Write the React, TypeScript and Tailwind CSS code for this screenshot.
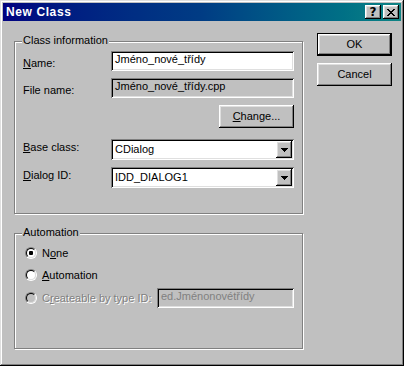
import React from 'react';

// Win98 bevels
const raised = 'shadow-[inset_-1px_-1px_#000,inset_1px_1px_#fff,inset_-2px_-2px_#808080,inset_2px_2px_#dfdfdf]';
const sunken = 'shadow-[inset_1px_1px_#808080,inset_-1px_-1px_#fff,inset_2px_2px_#000,inset_-2px_-2px_#dfdfdf]';

const U: React.FC<{ children: React.ReactNode }> = ({ children }) => (
  <span className="underline underline-offset-[1px]">{children}</span>
);

const GroupBox: React.FC<{ title: string; className: string; children: React.ReactNode }> = ({ title, className, children }) => (
  <div className={`relative border border-[#808080] shadow-[inset_1px_1px_#fff,1px_1px_#fff] ${className}`}>
    <span className="absolute -top-[8px] left-[7px] px-[1px] bg-[#c0c0c0]">{title}</span>
    {children}
  </div>
);

const Combo: React.FC<{ value: string }> = ({ value }) => (
  <div className={`flex items-center h-[21px] w-[183px] bg-white pl-[4px] pr-[2px] ${sunken}`}>
    <span className="flex-1">{value}</span>
    <div className={`flex items-center justify-center w-[16px] h-[17px] bg-[#c0c0c0] ${raised}`}>
      <svg width="7" height="4" viewBox="0 0 7 4" className="mt-[1px]">
        <path d="M0 0h7v1H0zM1 1h5v1H1zM2 2h3v1H2zM3 3h1v1H3z" fill="#000" />
      </svg>
    </div>
  </div>
);

const Radio: React.FC<{ checked?: boolean; disabled?: boolean }> = ({ checked, disabled }) => (
  <span className="w-[12px] h-[12px] shrink-0 rounded-full border border-t-[#808080] border-l-[#808080] border-r-white border-b-white">
    <span
      className={`flex items-center justify-center w-full h-full rounded-full border border-t-black border-l-black border-r-[#dfdfdf] border-b-[#dfdfdf] ${disabled ? 'bg-[#c0c0c0]' : 'bg-white'}`}
    >
      {checked && <span className="w-[4px] h-[4px] rounded-[1px] bg-black" />}
    </span>
  </span>
);

const Button: React.FC<{ children: React.ReactNode; isDefault?: boolean; className?: string }> = ({ children, isDefault, className = '' }) => (
  <div
    className={`flex items-center justify-center w-[75px] h-[23px] bg-[#c0c0c0] ${isDefault ? 'border border-black' : ''} ${raised} ${className}`}
  >
    {children}
  </div>
);

export default function App() {
  return (
    <div className="w-[404px] h-[366px] flex flex-col p-[3px] bg-[#c0c0c0] text-black font-['Liberation_Sans',Arial,sans-serif] text-[11px] leading-[13px] shadow-[inset_-1px_-1px_#000,inset_1px_1px_#dfdfdf,inset_-2px_-2px_#808080,inset_2px_2px_#fff]">
      {/* title bar */}
      <div className="flex items-center h-[18px] pl-[3px] pr-[2px] bg-gradient-to-r from-[#000080] via-[#003c84] to-[#108484]">
        <span className="flex-1 text-white font-bold text-[12px] tracking-[0.6px]">New Class</span>
        <div className={`flex items-center justify-center w-[16px] h-[14px] bg-[#c0c0c0] ${raised}`}>
          <span className="font-bold text-[12px] leading-[12px] font-['DejaVu_Sans',sans-serif]">?</span>
        </div>
        <div className={`flex items-center justify-center w-[16px] h-[14px] ml-[2px] bg-[#c0c0c0] ${raised}`}>
          <svg width="8" height="7" viewBox="0 0 8 7">
            <path
              d="M0 0h2v1H0zM6 0h2v1H6zM1 1h2v1H1zM5 1h2v1H5zM2 2h4v1H2zM3 3h2v1H3zM2 4h4v1H2zM1 5h2v1H1zM5 5h2v1H5zM0 6h2v1H0zM6 6h2v1H6z"
              fill="#000"
            />
          </svg>
        </div>
      </div>

      <div className="flex flex-1 pl-[11px]">
        {/* left column */}
        <div className="w-[289px] pt-[20px]">
          <GroupBox title="Class information" className="h-[173px] px-[8px] pt-[9px]">
            <div className="flex items-start">
              <span className="w-[88px] mt-[6px]">
                <U>N</U>ame:
              </span>
              <div className={`h-[20px] w-[183px] bg-white pl-[4px] pt-[2px] ${sunken}`}>Jméno_nové_třídy</div>
            </div>
            <div className="flex items-start mt-[7px]">
              <span className="w-[88px] mt-[6px]">File name:</span>
              <div className={`h-[20px] w-[183px] bg-[#c0c0c0] pl-[4px] pt-[2px] ${sunken}`}>Jméno_nové_třídy.cpp</div>
            </div>
            <div className="flex justify-end mt-[7px]">
              <Button>
                <U>C</U>hange...
              </Button>
            </div>
            <div className="flex items-start mt-[11px]">
              <span className="w-[88px] mt-[2px]">
                <U>B</U>ase class:
              </span>
              <Combo value="CDialog" />
            </div>
            <div className="flex items-start mt-[7px]">
              <span className="w-[88px] mt-[2px]">
                <U>D</U>ialog ID:
              </span>
              <Combo value="IDD_DIALOG1" />
            </div>
          </GroupBox>

          <GroupBox title="Automation" className="h-[116px] mt-[19px] pl-[10px] pr-[8px] pt-[12px]">
            <div className="flex items-center h-[14px] gap-[5px]">
              <Radio checked />
              <span>
                N<U>o</U>ne
              </span>
            </div>
            <div className="flex items-center h-[14px] gap-[5px] mt-[8px]">
              <Radio />
              <span>
                <U>A</U>utomation
              </span>
            </div>
            <div className="flex items-center h-[20px] gap-[5px] mt-[6px]">
              <Radio disabled />
              <span className="text-[#808080] [text-shadow:1px_1px_0_#fff]">
                C<U>r</U>eateable by type ID:
              </span>
              <div className={`ml-auto h-[20px] w-[137px] bg-[#c0c0c0] pl-[4px] pt-[2px] text-[#808080] ${sunken}`}>
                ed.Jménonovétřídy
              </div>
            </div>
          </GroupBox>
        </div>

        {/* right column */}
        <div className="ml-[14px] pt-[12px] flex flex-col gap-[7px]">
          <Button isDefault>OK</Button>
          <Button>Cancel</Button>
        </div>
      </div>
    </div>
  );
}
